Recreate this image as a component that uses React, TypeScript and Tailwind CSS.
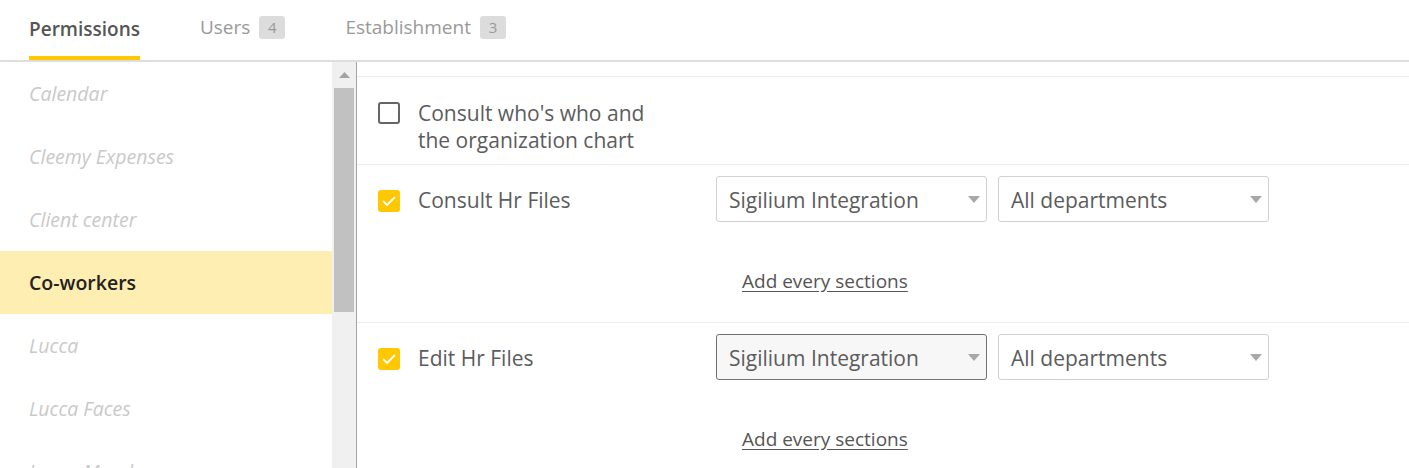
import React from "react";

const modules = [
  { name: "Calendar" },
  { name: "Cleemy Expenses" },
  { name: "Client center" },
  { name: "Co-workers", active: true },
  { name: "Lucca" },
  { name: "Lucca Faces" },
  { name: "Lucca Mood" },
];

function Checkbox({ checked }: { checked: boolean }) {
  if (!checked) {
    return (
      <span className="block h-[22px] w-[22px] shrink-0 rounded-[3px] border-2 border-[#666]" />
    );
  }
  return (
    <span className="flex h-[22px] w-[22px] shrink-0 items-center justify-center rounded-[3px] bg-[#ffc800]">
      <svg width="14" height="11" viewBox="0 0 14 11" fill="none">
        <path d="M1.5 5.5 5 9 12.5 1.5" stroke="white" strokeWidth="1.8" strokeLinecap="round" strokeLinejoin="round" />
      </svg>
    </span>
  );
}

function Select({ value, focused }: { value: string; focused?: boolean }) {
  return (
    <div
      className={`flex h-[46px] w-[271px] items-center justify-between rounded-[3px] border pl-[12px] pr-[6px] text-[21px] text-[#5c5c5c] ${
        focused ? "border-[#707070] bg-[#f7f7f7]" : "border-[#d0d0d0] bg-white"
      }`}
    >
      <span className="pt-[4px]">{value}</span>
      <svg width="12" height="7" viewBox="0 0 12 7">
        <path d="M0 0h12L6 7z" fill="#a8a8a8" />
      </svg>
    </div>
  );
}

function PermissionRow({ label, focused }: { label: string; focused?: boolean }) {
  return (
    <div className="border-b border-[#ececec] pt-[11px] pb-[28px]">
      <div className="flex items-center">
        <div className="mt-[4px] flex w-[359px] items-center gap-[18px] pl-[21px]">
          <Checkbox checked />
          <span className="text-[21px] text-[#5c5c5c]">{label}</span>
        </div>
        <div className="flex gap-[11px]">
          <Select value="Sigilium Integration" focused={focused} />
          <Select value="All departments" />
        </div>
      </div>
      <div className="mt-[47px] pl-[385px] leading-[24px]">
        <a className="text-[19px] text-[#555] underline underline-offset-[3px]">Add every sections</a>
      </div>
    </div>
  );
}

export default function App() {
  return (
    <div className="h-[468px] w-[1409px] overflow-hidden bg-white font-['Open_Sans',sans-serif]">
      {/* onglets */}
      <div className="flex h-[62px] gap-[60px] border-b-2 border-[#dedede] pl-[29px]">
        <div className="flex items-center border-b-4 border-[#ffc800] pt-[3px] text-[19px] font-semibold text-[#555]">
          Permissions
        </div>
        <div className="flex items-center gap-[9px] pb-[5px] text-[19px] text-[#999]">
          Users
          <span className="flex h-[23px] w-[26px] items-center justify-center rounded-[3px] bg-[#dcdcdc] text-[15px] text-[#999]">
            4
          </span>
        </div>
        <div className="flex items-center gap-[9px] pb-[5px] text-[19px] text-[#999]">
          Establishment
          <span className="flex h-[23px] w-[26px] items-center justify-center rounded-[3px] bg-[#dcdcdc] text-[15px] text-[#999]">
            3
          </span>
        </div>
      </div>

      <div className="flex h-[406px]">
        {/* liste des modules */}
        <div className="w-[332px] shrink-0">
          {modules.map((m) => (
            <div
              key={m.name}
              className={`flex h-[63px] items-center pl-[29px] text-[19.5px] ${
                m.active
                  ? "bg-[#ffeeb2] font-semibold text-[#222]"
                  : "italic text-[#c9c9c9]"
              }`}
            >
              {m.name}
            </div>
          ))}
        </div>

        {/* barre de défilement */}
        <div className="flex w-[25px] shrink-0 flex-col border-r border-[#a5a5a5] bg-[#f0f0f0]">
          <div className="flex h-[26px] items-center justify-center">
            <svg width="11" height="6" viewBox="0 0 11 6">
              <path d="M0 6h11L5.5 0z" fill="#a3a3a3" />
            </svg>
          </div>
          <div className="mx-[2px] h-[224px] bg-[#c1c1c1]" />
        </div>

        {/* permissions */}
        <div className="flex-1">
          <div className="h-[15px] border-b border-[#ececec]" />
          <div className="flex items-start gap-[18px] border-b border-[#ececec] pt-[23px] pb-[10px] pl-[21px]">
            <span className="mt-[2px]">
              <Checkbox checked={false} />
            </span>
            <span className="text-[21px] leading-[27px] text-[#5c5c5c]">
              Consult who's who and
              <br />
              the organization chart
            </span>
          </div>
          <PermissionRow label="Consult Hr Files" />
          <PermissionRow label="Edit Hr Files" focused />
        </div>
      </div>
    </div>
  );
}
